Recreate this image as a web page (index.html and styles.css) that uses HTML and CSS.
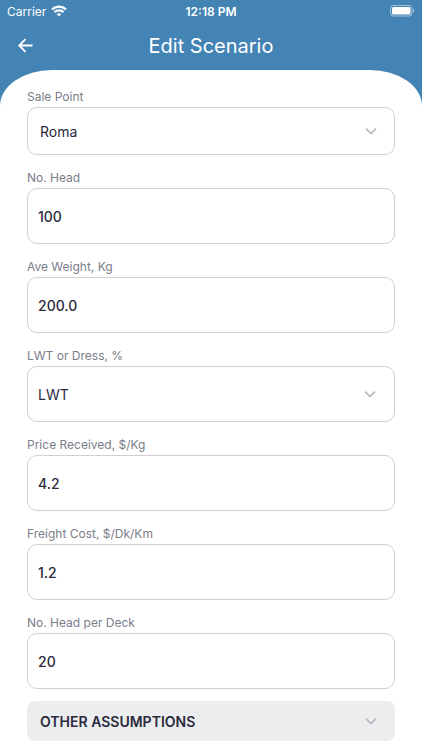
FILE: index.html
```html
<!DOCTYPE html>
<html lang="en">
<head>
  <meta charset="UTF-8" />
  <meta name="viewport" content="width=device-width, initial-scale=1.0"/>
  <title>Edit Scenario</title>
  <link rel="stylesheet" href="styles.css">
</head>
<body>

  <!-- Status bar -->
  <div class="status-bar">
    <div class="carrier">
      <span>Carrier</span>
      <svg width="16" height="12" viewBox="0 0 16 12" fill="none" stroke="#fff" stroke-width="2.2">
        <path d="M1 4.4C5 .6 11 .6 15 4.4"/>
        <path d="M3.5 7.1C6 4.8 10 4.8 12.5 7.1"/>
        <path d="M5.6 9.1C7 7.9 9 7.9 10.4 9.1L8 11.6Z" fill="#fff" stroke="none"/>
      </svg>
    </div>
    <span class="time">12:18 PM</span>
    <svg class="battery" width="25" height="12" viewBox="0 0 25 12">
      <rect x=".5" y=".5" width="21.5" height="10.5" rx="3" fill="none" stroke="#fff" stroke-opacity=".5"/>
      <rect x="2" y="2" width="18.5" height="7.5" rx="1.5" fill="#fff"/>
      <path d="M23.2 4v3.6c1.5-.5 1.5-3.1 0-3.6z" fill="#fff" fill-opacity=".6"/>
    </svg>
  </div>

  <header class="app-bar">
    <button class="back" type="button" aria-label="Back">
      <svg width="16" height="16" viewBox="0 0 16 16" fill="none" stroke="#fff" stroke-width="1.8">
        <path d="M15.5 7.5H2.5M8.5 1.2L2.2 7.5L8.5 13.8"/>
      </svg>
    </button>
    <h1>Edit Scenario</h1>
  </header>

  <!-- Scenario form -->
  <form class="sheet">
    <div class="fields">
      <div class="field">
        <label for="salePoint">Sale Point</label>
        <div class="select-box compact">
          <select id="salePoint">
            <option>Roma</option>
          </select>
          <svg class="chevron" width="12" height="8" viewBox="0 0 12 8"><path d="M1 1.6l5 5 5-5"/></svg>
        </div>
      </div>

      <div class="field">
        <label for="head">No. Head</label>
        <input type="text" id="head" value="100">
      </div>

      <div class="field">
        <label for="weight">Ave Weight, Kg</label>
        <input type="text" id="weight" value="200.0">
      </div>

      <div class="field">
        <label for="dress">LWT or Dress, %</label>
        <div class="select-box">
          <select id="dress">
            <option>LWT</option>
          </select>
          <svg class="chevron" width="12" height="8" viewBox="0 0 12 8"><path d="M1 1.6l5 5 5-5"/></svg>
        </div>
      </div>

      <div class="field">
        <label for="price">Price Received, $/Kg</label>
        <input type="text" id="price" value="4.2">
      </div>

      <div class="field">
        <label for="freight">Freight Cost, $/Dk/Km</label>
        <input type="text" id="freight" value="1.2">
      </div>

      <div class="field">
        <label for="deck">No. Head per Deck</label>
        <input type="text" id="deck" value="20">
      </div>
    </div>

    <button class="expander" type="button">
      <span>OTHER ASSUMPTIONS</span>
      <svg class="chevron" width="12" height="8" viewBox="0 0 12 8"><path d="M1 1.6l5 5 5-5"/></svg>
    </button>
  </form>

</body>
</html>
```
FILE: styles.css
```css
* {
  box-sizing: border-box;
}

body {
  font-family: Inter, sans-serif;
  margin: 0;
  background: #4484b5;
  color: #2b2a3d;
}

.status-bar {
  display: grid;
  grid-template-columns: 1fr auto 1fr;
  align-items: center;
  height: 22px;
  padding: 0 7px;
  color: #fff;
  font-size: 12px;
}

.carrier {
  display: flex;
  align-items: center;
  gap: 5px;
}

.time {
  font-weight: 600;
}

.battery {
  justify-self: end;
}

.app-bar {
  display: grid;
  grid-template-columns: 50px 1fr 50px;
  align-items: center;
  height: 48px;
  color: #fff;
}

.back {
  display: flex;
  justify-content: center;
  padding: 0;
  border: none;
  background: none;
  cursor: pointer;
}

h1 {
  margin: 0;
  font-size: 20px;
  line-height: 24px;
  font-weight: 400;
  text-align: center;
}

.sheet {
  display: flex;
  flex-direction: column;
  gap: 12px;
  padding: 18px 27px 9px;
  background: #fff;
  border-radius: 52px 52px 0 0 / 36px 36px 0 0;
}

.fields {
  display: flex;
  flex-direction: column;
  gap: 14px;
}

.field {
  display: flex;
  flex-direction: column;
  gap: 1px;
}

label {
  font-size: 12px;
  line-height: 18px;
  color: #7b7d8a;
}

input, select {
  width: 100%;
  height: 56px;
  padding: 0 10px;
  border: 1px solid #cfcfd4;
  border-radius: 10px;
  background: #fff;
  color: inherit;
  font-family: inherit;
  font-size: 14px;
  font-weight: 500;
}

select {
  appearance: none;
  font-weight: 400;
}

.select-box {
  display: grid;
  align-items: center;
}

.select-box > * {
  grid-area: 1 / 1;
}

.select-box .chevron {
  justify-self: end;
  margin-right: 19px;
  pointer-events: none;
}

.compact select {
  height: 48px;
  padding: 0 12px;
}

.compact .chevron {
  margin-right: 18px;
}

.chevron {
  fill: none;
  stroke: #b9babd;
  stroke-width: 1.8;
}

.expander {
  display: flex;
  justify-content: space-between;
  align-items: center;
  height: 40px;
  padding: 0 18px 0 13px;
  border: none;
  border-radius: 8px;
  background: #ecedef;
  color: inherit;
  font-family: inherit;
  font-size: 14px;
  font-weight: 600;
  cursor: pointer;
}
```
